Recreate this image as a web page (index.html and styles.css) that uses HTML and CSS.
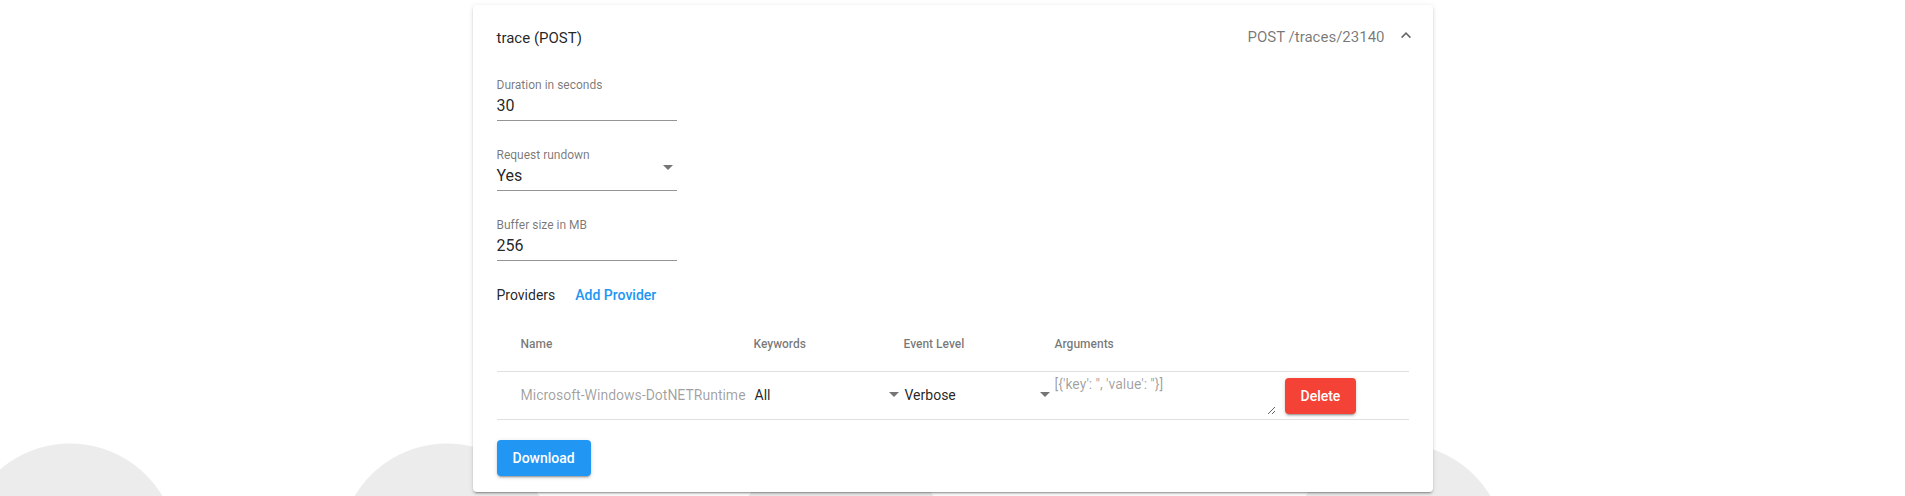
FILE: index.html
```html
<!DOCTYPE html>
<html lang="en">
<head>
<meta charset="utf-8">
<title>trace (POST)</title>
<link rel="stylesheet" href="styles.css">
</head>
<body>
<div class="card">
  <div class="card-header">
    <div class="title">trace (POST)</div>
    <div class="header-right">
      <span class="endpoint">POST /traces/23140</span>
      <svg class="chevron" width="10" height="6.2" viewBox="6 8 12 7.41" preserveAspectRatio="none"><path d="M7.41,15.41L12,10.83L16.59,15.41L18,14L12,8L6,14L7.41,15.41Z" fill="#666"/></svg>
    </div>
  </div>
  <div class="card-body">
    <div class="field">
      <div class="field-label">Duration in seconds</div>
      <div class="field-value">30</div>
    </div>
    <div class="field">
      <div class="field-label">Request rundown</div>
      <div class="field-value select-value">
        <span>Yes</span>
        <svg class="arrow field-arrow" width="10" height="5" viewBox="0 0 10 5"><path d="M0 0L10 0L5 5Z" fill="#757575"/></svg>
      </div>
    </div>
    <div class="field">
      <div class="field-label">Buffer size in MB</div>
      <div class="field-value">256</div>
    </div>

    <div class="providers">
      <span class="providers-title">Providers</span>
      <span class="add-provider">Add Provider</span>
    </div>

    <div class="table">
      <div class="table-head">
        <div class="th th-name">Name</div>
        <div class="th th-pad">Keywords</div>
        <div class="th th-pad">Event Level</div>
        <div class="th th-pad">Arguments</div>
        <div class="th"></div>
      </div>
      <div class="table-row">
        <div class="td td-name">Microsoft-Windows-DotNETRuntime</div>
        <div class="td td-select">
          <span>All</span>
          <svg class="arrow" width="10" height="5" viewBox="0 0 10 5"><path d="M0 0L10 0L5 5Z" fill="#757575"/></svg>
        </div>
        <div class="td td-select">
          <span>Verbose</span>
          <svg class="arrow" width="10" height="5" viewBox="0 0 10 5"><path d="M0 0L10 0L5 5Z" fill="#757575"/></svg>
        </div>
        <div class="td td-args">
          <textarea class="args" placeholder="[{'key': '', 'value': ''}]"></textarea>
        </div>
        <div class="td td-action">
          <button class="btn btn-delete">Delete</button>
        </div>
      </div>
    </div>

    <button class="btn btn-download">Download</button>
  </div>
</div>
</body>
</html>
```

FILE: styles.css
```css
html, body {
  margin: 0;
  padding: 0;
  height: 100%;
}
body {
  font-family: Roboto, "Liberation Sans", Arial, sans-serif;
  color: rgba(0,0,0,.87);
  background-color: #fff;
  background-image:
    radial-gradient(circle 108px at 70px 551px, #ececec 99%, rgba(236,236,236,0) 100%),
    radial-gradient(circle 108px at 447px 551px, #ececec 99%, rgba(236,236,236,0) 100%),
    radial-gradient(circle 108px at 841px 551px, #ececec 99%, rgba(236,236,236,0) 100%),
    radial-gradient(circle 108px at 1398px 551px, #ececec 99%, rgba(236,236,236,0) 100%);
  background-repeat: no-repeat;
  overflow: hidden;
}

.card {
  width: 960px;
  margin: 5px auto 0;
  background: #fff;
  border-radius: 4px;
  box-shadow: 0 3px 1px -2px rgba(0,0,0,.2), 0 2px 2px 0 rgba(0,0,0,.14), 0 1px 5px 0 rgba(0,0,0,.12);
}

.card-header {
  height: 64px;
  display: flex;
  align-items: center;
  justify-content: space-between;
  padding: 0 22px 0 24px;
  font-size: 15px;
}
.title {
  color: rgba(0,0,0,.87);
  padding-top: 1px;
}
.header-right {
  display: flex;
  align-items: center;
}
.endpoint {
  color: rgba(0,0,0,.54);
}
.chevron {
  margin-left: 16px;
  margin-top: -4px;
  display: block;
}

.card-body {
  padding: 8px 24px 16px;
}

.field {
  width: 180px;
  border-bottom: 1px solid rgba(0,0,0,.42);
  margin-bottom: 26px;
}
.field:nth-of-type(3) {
  margin-bottom: 0;
}
.field-label {
  font-size: 12px;
  line-height: 16px;
  color: rgba(0,0,0,.54);
}
.field-value {
  font-size: 16px;
  line-height: 22px;
  margin-top: 2px;
  padding-bottom: 3px;
  color: rgba(0,0,0,.87);
}
.select-value {
  display: flex;
  justify-content: space-between;
}
.field-arrow {
  margin-top: 0;
  margin-right: 4px;
}
.arrow {
  display: block;
  flex: none;
}

.providers {
  margin-top: 16px;
  height: 36px;
  display: flex;
  align-items: center;
  font-size: 14px;
}
.providers-title {
  color: rgba(0,0,0,.87);
}
.add-provider {
  margin-left: 20px;
  color: #2196f3;
  font-weight: 500;
}

.table {
  margin-top: 3px;
}
.table-head,
.table-row {
  display: grid;
  grid-template-columns: 256px 150px 151px 222px 1fr;
  border-bottom: 1px solid rgba(0,0,0,.12);
}
.table-head {
  height: 55px;
  align-items: center;
}
.th {
  font-size: 12px;
  font-weight: 500;
  color: rgba(0,0,0,.54);
}
.th-name {
  padding-left: 24px;
}
.th-pad {
  padding-left: 1px;
}
.table-row {
  height: 47px;
  align-items: center;
}
.td {
  font-size: 14px;
}
.td-name {
  padding-left: 24px;
  font-size: 14px;
  color: rgba(0,0,0,.38);
  white-space: nowrap;
  margin-top: -2px;
}
.td-select {
  display: flex;
  align-items: center;
  justify-content: space-between;
  padding-left: 2px;
  padding-right: 4px;
  font-size: 14px;
  color: rgba(0,0,0,.87);
  margin-top: -2px;
}
.td-args {
  align-self: start;
  padding-top: 3px;
}
.args {
  display: block;
  width: 222px;
  height: 40px;
  box-sizing: border-box;
  margin: 0;
  padding: 0 0 0 1px;
  border: none;
  outline: none;
  background: transparent;
  font-family: Roboto, "Liberation Sans", Arial, sans-serif;
  font-size: 14px;
  line-height: 18px;
  color: rgba(0,0,0,.87);
}
.args::placeholder {
  color: rgba(0,0,0,.38);
}
.td-action {
  padding-left: 9px;
}

.btn {
  display: block;
  height: 36px;
  border: none;
  border-radius: 4px;
  padding: 0 16px;
  font-family: Roboto, "Liberation Sans", Arial, sans-serif;
  font-size: 14px;
  font-weight: 500;
  color: #fff;
  box-shadow: 0 3px 1px -2px rgba(0,0,0,.2), 0 2px 2px 0 rgba(0,0,0,.14), 0 1px 5px 0 rgba(0,0,0,.12);
}
.btn-delete {
  width: 71px;
  background: #f44336;
}
.btn-download {
  width: 94px;
  margin-top: 20px;
  background: #2196f3;
}
```
